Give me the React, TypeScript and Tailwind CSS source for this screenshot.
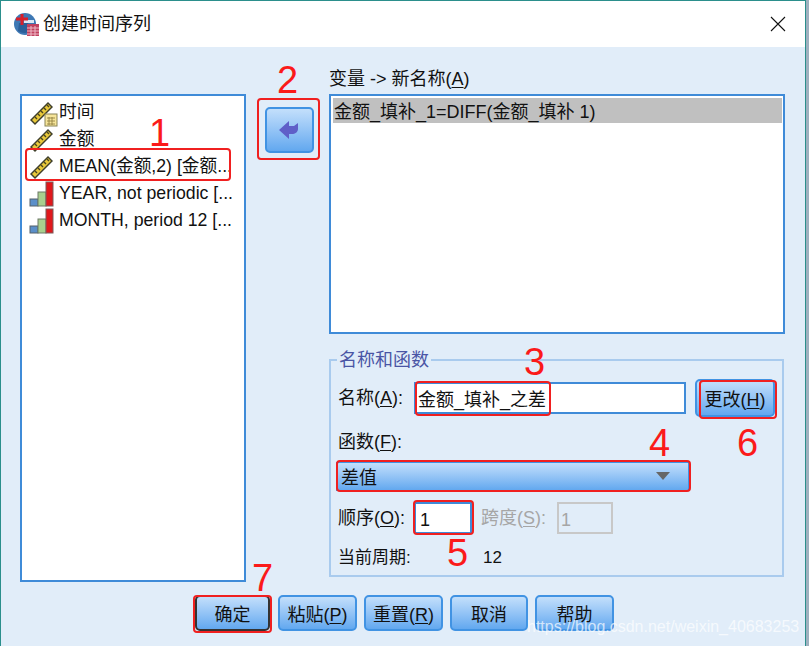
const FONT = "font-['Liberation_Sans','Noto_Sans_CJK_SC',sans-serif]";

const Ruler = () => (
  <svg width="26" height="26" viewBox="0 0 26 26" className="shrink-0">
    <path d="M1 20 L19 2 L24 7 L6 25 Z" fill="#3f3f2a" />
    <path d="M3 20 L19 4 L22 7 L6 23 Z" fill="#e8c83a" />
    <path d="M6 17l2 2M9 14l2 2M12 11l2 2M15 8l2 2M18 5l2 2" stroke="#4a4420" strokeWidth="1.4" />
  </svg>
);

const DateRuler = () => (
  <div className="relative w-[26px] h-[26px] shrink-0">
    <Ruler />
    <svg width="14" height="14" viewBox="0 0 14 14" className="absolute right-[-3px] bottom-[-1px]">
      <rect x="1" y="1" width="12" height="12" fill="#f6e59a" stroke="#8a8456" />
      <path d="M3 5h8M3 8h8M3 11h8M5 4v8M8 4v8" stroke="#8a7a3a" strokeWidth="0.8" />
    </svg>
  </div>
);

const Bars = () => (
  <svg width="26" height="26" viewBox="0 0 26 26" className="shrink-0">
    <rect x="1" y="18" width="8" height="7" fill="#5b8fc9" stroke="#55606b" />
    <rect x="9" y="11" width="8" height="14" fill="#a9cf8e" stroke="#6d7a66" />
    <rect x="17" y="1" width="7" height="24" fill="#e0181c" stroke="#7d5a5a" />
  </svg>
);

const AppIcon = () => (
  <svg width="26" height="26" viewBox="0 0 26 26" className="shrink-0">
    <circle cx="12" cy="13" r="11" fill="#3e78b4" />
    <path d="M5 20a11 11 0 0 0 14-1l-4-7H6z" fill="#2b5f99" />
    <path d="M11 9h10v3H11z" fill="#dbe9f6" />
    <path d="M9 3v11M3 8h12" stroke="#d81f2a" strokeWidth="3" />
    <rect x="14" y="13" width="12" height="12" fill="#c0415f" />
    <path d="M14 17h12M14 20h12M14 23h12M18 15v10M22 15v10" stroke="#eeb9c6" strokeWidth="1" />
  </svg>
);

const BTN =
  "border-2 border-[#4193e3] rounded-[5px] bg-gradient-to-b from-[#c3dffb] to-[#62a8ef] flex items-center justify-center pt-[5px] text-[18px] text-[#111]";

const Key = ({ k }: { k: string }) => <span className="underline underline-offset-2">{k}</span>;

const vars = [
  { icon: <DateRuler />, label: "时间" },
  { icon: <Ruler />, label: "金额" },
  { icon: <Ruler />, label: "MEAN(金额,2) [金额..." },
  { icon: <Bars />, label: "YEAR, not periodic [..." },
  { icon: <Bars />, label: "MONTH, period 12 [..." },
];

const footer = [
  { label: "粘贴", k: "P", w: "w-[79px]" },
  { label: "重置", k: "R", w: "w-[79px]" },
  { label: "取消", w: "w-[78px]" },
  { label: "帮助", w: "w-[79px]" },
];

const marks = [
  { cls: "left-[25px] top-[148px] w-[206px] h-[33px]" },
  { cls: "left-[257px] top-[98px] w-[63px] h-[62px]" },
  { cls: "left-[415px] top-[381px] w-[136px] h-[35px]" },
  { cls: "left-[336px] top-[460px] w-[355px] h-[32px]" },
  { cls: "left-[413px] top-[500px] w-[61px] h-[35px]" },
  { cls: "left-[699px] top-[380px] w-[78px] h-[39px]" },
  { cls: "left-[193px] top-[595px] w-[79px] h-[38px]" },
];

const nums = [
  { n: "1", cls: "left-[149px] top-[111px]" },
  { n: "2", cls: "left-[277px] top-[58px]" },
  { n: "3", cls: "left-[524px] top-[340px]" },
  { n: "4", cls: "left-[649px] top-[421px]" },
  { n: "5", cls: "left-[447px] top-[531px]" },
  { n: "6", cls: "left-[737px] top-[421px]" },
  { n: "7", cls: "left-[252px] top-[556px]" },
];

export default function App() {
  return (
    <div className={`relative w-[809px] h-[646px] overflow-hidden flex bg-[#9fb0bf] text-[#111] ${FONT}`}>
      <div className="w-[806px] h-[646px] flex flex-col border-t border-l border-r border-[#2b8f8c]">
        {/* title bar */}
        <div className="h-[46px] shrink-0 bg-white flex items-center pl-[12px] pr-[19px]">
          <AppIcon />
          <span className="ml-[4px] text-[18px] leading-none">创建时间序列</span>
          <svg width="16" height="16" viewBox="0 0 16 16" className="ml-auto">
            <path d="M1 1l14 14M15 1L1 15" stroke="#111" strokeWidth="1.1" />
          </svg>
        </div>

        <div className="flex-1 bg-[#e1edf9] pt-[22px]">
          <div className="flex items-start">
            {/* source list */}
            <div className="ml-[19px] mt-[25px] w-[226px] h-[488px] border-2 border-[#3f8bd8] bg-white pt-[3px] pl-[7px]">
              {vars.map((v) => (
                <div key={v.label} className="h-[27px] flex items-center gap-[4px] whitespace-nowrap text-[17.7px]">
                  {v.icon}
                  <span>{v.label}</span>
                </div>
              ))}
            </div>

            {/* move button */}
            <button className={`${BTN} !pt-0 ml-[19px] mt-[38px] w-[49px] h-[46px]`}>
              <svg width="24" height="20" viewBox="0 0 24 20">
                <path d="M1 10L11 1v5h5l4-3v6c0 3-3 5-6 5h-3v5z" fill="#5f5fc8" />
              </svg>
            </button>

            <div className="ml-[15px] w-[456px]">
              <div className="h-[25px] text-[18px] leading-[20px]">
                变量 -&gt; 新名称(<Key k="A" />)
              </div>
              <div className="h-[240px] w-[456px] border-2 border-[#3f8bd8] bg-white p-[2px]">
                <div className="bg-[#c0c0c0] h-[25px] w-[449px] pl-[1px] text-[18px] leading-[29px] whitespace-nowrap">金额_填补_1=DIFF(金额_填补 1)</div>
              </div>

              {/* group */}
              <fieldset className="mt-[16px] h-[227px] w-[455px] border-2 border-[#a9cbee] pl-[7px] pr-[7px]">
                <legend className="-ml-[1px] px-[2px] text-[18px] leading-[20px] text-[#4a55a5]">名称和函数</legend>
                <div className="flex items-center h-[38px] mt-[9px]">
                  <span className="w-[76px] text-[18px]">
                    名称(<Key k="A" />):
                  </span>
                  <div className="w-[272px] h-[32px] border-2 border-[#3f8bd8] bg-white pl-[2px] text-[18px] leading-[32px]">
                    金额_填补_之差
                  </div>
                  <button className={`${BTN} !pt-[4px] ml-[9px] w-[80px] h-[38px]`}>
                    更改(<Key k="H" />)
                  </button>
                </div>
                <div className="h-[20px] mt-[15px] text-[18px] leading-[20px]">
                  函数(<Key k="F" />):
                </div>
                <div className="mt-[10px] -ml-[2px] w-[353px] h-[29px] border border-[#4193e3] bg-gradient-to-b from-[#c3dffb] to-[#62a8ef] flex items-center pl-[4px] pr-[18px] pt-[3px] text-[18px]">
                  差值
                  <svg width="14" height="8" viewBox="0 0 14 8" className="ml-auto -mt-[5px]">
                    <path d="M0 0h14L7 8z" fill="#666" />
                  </svg>
                </div>
                <div className="flex items-center h-[32px] mt-[11px] text-[18px]">
                  <span className="w-[76px]">
                    顺序(<Key k="O" />):
                  </span>
                  <div className="w-[58px] h-[32px] border-2 border-[#3f8bd8] bg-white pl-[4px] leading-[32px]">1</div>
                  <span className="ml-[9px] w-[76px] text-[#a6a6a6]">
                    跨度(<Key k="S" />):
                  </span>
                  <div className="w-[56px] h-[32px] border-2 border-[#c8c8c8] pl-[2px] leading-[32px] text-[#a6a6a6]">1</div>
                </div>
                <div className="flex items-center h-[20px] mt-[14px] text-[17px]">
                  <span className="w-[145px]">当前周期:</span>
                  <span>12</span>
                </div>
              </fieldset>
            </div>
          </div>

          {/* footer buttons */}
          <div className="flex mt-[13px] pl-[194px] gap-[7px]">
            <button className={`${BTN} w-[75px] h-[36px] mr-[1px] !border-[#333]`}>确定</button>
            {footer.map((b) => (
              <button key={b.label} className={`${BTN} ${b.w} h-[36px]`}>
                {b.label}
                {b.k && (
                  <>
                    (<Key k={b.k} />)
                  </>
                )}
              </button>
            ))}
          </div>
        </div>
      </div>

      {/* annotations drawn over the dialog */}
      {marks.map((m) => (
        <div key={m.cls} className={`absolute border-2 border-[#f02020] rounded-[4px] ${m.cls}`} />
      ))}
      {nums.map((n) => (
        <span key={n.n} className={`absolute text-[38px] leading-[44px] text-[#fb1a1a] ${n.cls}`}>
          {n.n}
        </span>
      ))}
      <span className="absolute left-[527px] top-[617px] text-[16px] leading-[20px] text-white/70 whitespace-nowrap">
        https://blog.csdn.net/weixin_40683253
      </span>
    </div>
  );
}
